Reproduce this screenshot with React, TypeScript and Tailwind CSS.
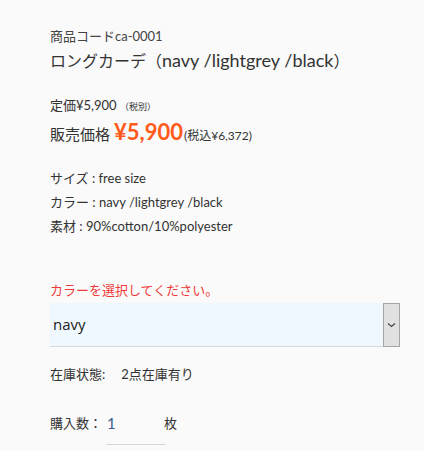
export default function App() {
  return (
    <div
      className="min-h-[451px] bg-[#fafafa] pl-[50px] pt-[26px] text-[#333]"
      style={{ fontFamily: 'Lato, "Noto Sans CJK JP", sans-serif' }}
    >
      <div className="text-[13px] leading-[20px] text-[#444]">商品コードca-0001</div>
      <div className="mt-px text-[18px] leading-[26px] text-[#333]">
        <span className="text-[16px]">ロングカーデ（</span>navy /lightgrey /black<span className="text-[16px]">）</span>
      </div>

      <div className="mt-[21px] text-[13px] leading-[20px]">
        定価¥5,900 <span className="text-[9px]">（税別）</span>
      </div>
      <div className="mt-[1px] flex items-baseline leading-[28px]">
        <span className="text-[15px]">販売価格</span>
        <span className="ml-1 text-[22px] font-bold text-[#ff5a1a]">¥5,900</span>
        <span className="ml-px text-[12px]">(税込¥6,372)</span>
      </div>

      <div className="mt-[16px] text-[13px] leading-[24px]">
        <div>サイズ : free size</div>
        <div>カラー : navy /lightgrey /black</div>
        <div>素材 : 90%cotton/10%polyester</div>
      </div>

      <div className="mt-[42px] text-[13px] leading-[20px] text-[#f03a3a]">カラーを選択してください。</div>
      <div className="mt-[3px] flex h-[44px] w-[350px] border-b border-[#d2dadd] bg-[#eff7ff]">
        <div className="flex flex-1 items-center pl-[3px] text-[15px] text-[#222]" style={{ fontFamily: '"Open Sans", Lato, sans-serif' }}>
          navy
        </div>
        <div className="mb-[-1px] flex w-[17px] items-center justify-center border border-[#a6a6a6] bg-[#e1e1e1]">
          <svg width="9" height="6" viewBox="0 0 9 6">
            <path d="M1 1.5 L4.5 4.5 L8 1.5" fill="none" stroke="#444" strokeWidth="1.2" />
          </svg>
        </div>
      </div>

      <div className="mt-[17px] flex text-[13px] leading-[20px]">
        <span>在庫状態:</span>
        <span className="ml-[16px]">2点在庫有り</span>
      </div>

      <div className="mt-[29px] flex items-start text-[13px] leading-[20px]">
        <span>購入数：</span>
        <div className="ml-[4px] h-[32px] w-[60px] border-b border-[#d2dadd] pl-px text-[15px] text-[#3a5a8a]">1</div>
        <span className="ml-[-2px]">枚</span>
      </div>
    </div>
  );
}
